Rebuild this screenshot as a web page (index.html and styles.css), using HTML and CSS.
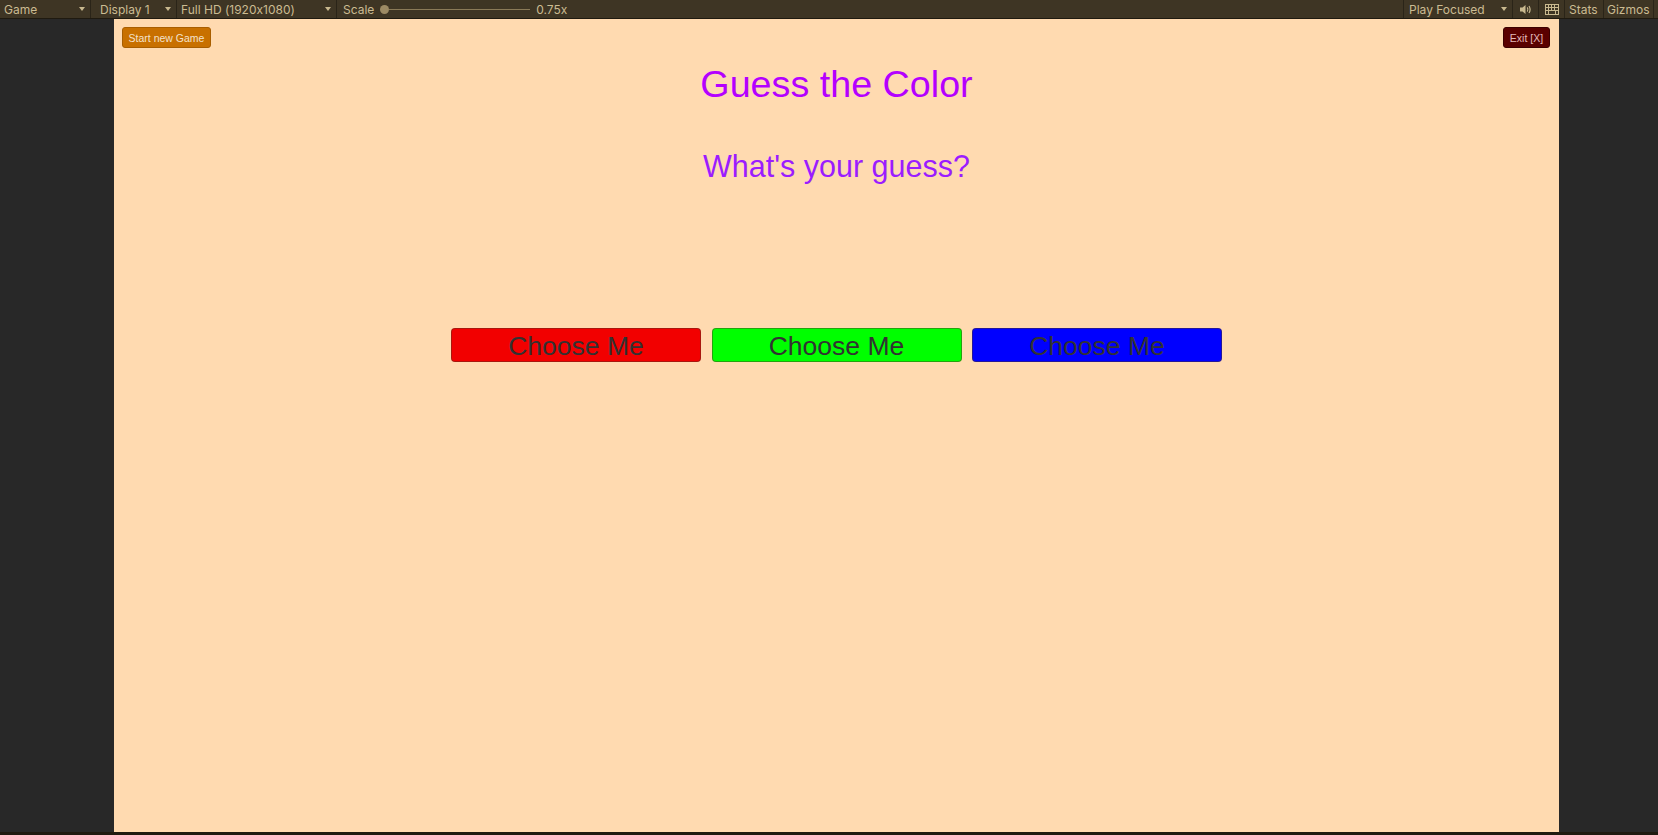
FILE: index.html
```html
<!DOCTYPE html>
<html>
<head>
<meta charset="utf-8">
<link rel="stylesheet" href="styles.css">
</head>
<body>
<div class="toolbar">
  <div class="tb-left">
    <div class="tb-item dd w-game"><span>Game</span><i class="arrow"></i></div>
    <div class="tb-item dd w-display"><span>Display 1</span><i class="arrow"></i></div>
    <div class="tb-item dd w-res"><span>Full HD (1920x1080)</span><i class="arrow"></i></div>
    <div class="tb-item scale">
      <span>Scale</span>
      <div class="slider"><div class="knob"></div><div class="track"></div></div>
      <span class="scale-val">0.75x</span>
    </div>
  </div>
  <div class="tb-right">
    <div class="tb-item dd w-play sep-left"><span>Play Focused</span><i class="arrow"></i></div>
    <div class="tb-item icon-item">
      <svg width="13" height="11" viewBox="0 0 13 11"><path d="M1 3.5h2.5L6.5 1v9L3.5 7.5H1z" fill="#c9b98f"/><path d="M8.3 3.4q1.3 2.1 0 4.2" stroke="#c9b98f" stroke-width="1.2" fill="none"/><path d="M10 2q2.2 3.5 0 7" stroke="#c9b98f" stroke-width="1.2" fill="none"/></svg>
    </div>
    <div class="tb-item icon-item">
      <svg width="14" height="11" viewBox="0 0 14 11"><rect x="0.5" y="0.5" width="13" height="10" fill="none" stroke="#c9b98f"/><path d="M0.5 3.5h13M0.5 6.5h13M3.5 0.5v10M6.5 0.5v6M9.5 0.5v6M10.5 6.5v4" stroke="#c9b98f" stroke-width="1"/></svg>
    </div>
    <div class="tb-item w-stats"><span>Stats</span></div>
    <div class="tb-item w-gizmos"><span>Gizmos</span></div>
  </div>
</div>
<div class="viewport">
  <div class="game">
    <div class="game-header">
      <button class="btn-start">Start new Game</button>
      <button class="btn-exit">Exit [X]</button>
    </div>
    <h1 class="title">Guess the Color</h1>
    <h2 class="subtitle">What's your guess?</h2>
    <div class="choices">
      <button class="choice red">Choose Me</button>
      <button class="choice green">Choose Me</button>
      <button class="choice blue">Choose Me</button>
    </div>
  </div>
</div>
<div class="bottom-strip"></div>
</body>
</html>
```
FILE: styles.css
```css
html, body {
  margin: 0;
  padding: 0;
  height: 835px;
  overflow: hidden;
}
body {
  background: #282828;
  font-family: "Liberation Sans", Arial, sans-serif;
  display: flex;
  flex-direction: column;
}
.toolbar {
  height: 18px;
  background: #3e3524;
  border-bottom: 1px solid #1f1a10;
  display: flex;
  justify-content: space-between;
  font-family: Inter, "Noto Sans", sans-serif;
  font-feature-settings: "calt" 0;
  font-size: 12px;
  color: #cbbb92;
  flex: none;
}
.tb-left, .tb-right {
  display: flex;
  height: 18px;
}
.tb-right {
  padding-right: 4px;
}
.tb-item {
  display: flex;
  align-items: center;
  height: 18px;
  border-right: 1px solid #2a2418;
  box-sizing: border-box;
  white-space: nowrap;
}
.sep-left {
  border-left: 1px solid #2a2418;
}
.dd {
  justify-content: space-between;
  padding: 0 5px 0 4px;
}
.w-game { width: 91px; }
.w-display { width: 86px; padding-left: 9px; }
.w-res { width: 160px; }
.w-play { width: 110px; padding-left: 5px; }
.icon-item {
  width: 26px;
  justify-content: center;
}
.w-stats { width: 39px; padding-left: 4px; }
.w-gizmos { width: 50px; padding-left: 3px; }
.arrow {
  width: 0;
  height: 0;
  border-left: 3.5px solid transparent;
  border-right: 3.5px solid transparent;
  border-top: 4px solid #c9b98f;
}
.scale {
  border-right: none;
  padding-left: 6px;
}
.slider {
  display: flex;
  align-items: center;
  margin-left: 6px;
  width: 150px;
}
.knob {
  width: 9px;
  height: 9px;
  border-radius: 50%;
  background: #9c8a64;
  flex: none;
}
.track {
  height: 1px;
  background: #8a7a58;
  flex: 1;
}
.scale-val {
  margin-left: 6px;
}
.viewport {
  flex: 1;
  display: flex;
  padding-left: 114px;
}
.game {
  width: 1445px;
  height: 813px;
  background: #ffdab0;
  display: flex;
  flex-direction: column;
  align-items: center;
}
.game-header {
  align-self: stretch;
  display: flex;
  justify-content: space-between;
  padding: 8px 9px 0 8px;
}
.game-header button {
  height: 21px;
  border-radius: 3px;
  font-family: "Liberation Sans", Arial, sans-serif;
  font-size: 10.5px;
  padding: 0;
  display: flex;
  align-items: center;
  justify-content: center;
}
.btn-start {
  width: 89px;
  background: #c87000;
  border: 1px solid #a85e00;
  color: #f3e2cc;
}
.btn-exit {
  width: 47px;
  background: #5a0000;
  border: 1px solid #3c0000;
  color: #e2b9b9;
}
.title {
  margin: 18px 0 0;
  font-size: 37.7px;
  line-height: 36px;
  font-weight: normal;
  color: #b400ff;
}
.subtitle {
  margin: 49px 0 0;
  font-size: 30.5px;
  line-height: 30px;
  font-weight: normal;
  color: #9b1cff;
}
.choices {
  margin-top: 147px;
  display: flex;
  gap: 10.5px;
}
.choice {
  width: 250px;
  height: 34px;
  border-radius: 4px;
  border: 1px solid rgba(80, 50, 30, 0.45);
  font-family: "Liberation Sans", Arial, sans-serif;
  font-size: 26.5px;
  color: #323232;
  padding: 3px 0 0;
  display: flex;
  align-items: center;
  justify-content: center;
}
.red { background: #f20000; }
.green { background: #00ff00; }
.blue { background: #0000ff; color: #333333; }
.bottom-strip {
  height: 3px;
  background: #1f1a10;
  flex: none;
}
```
